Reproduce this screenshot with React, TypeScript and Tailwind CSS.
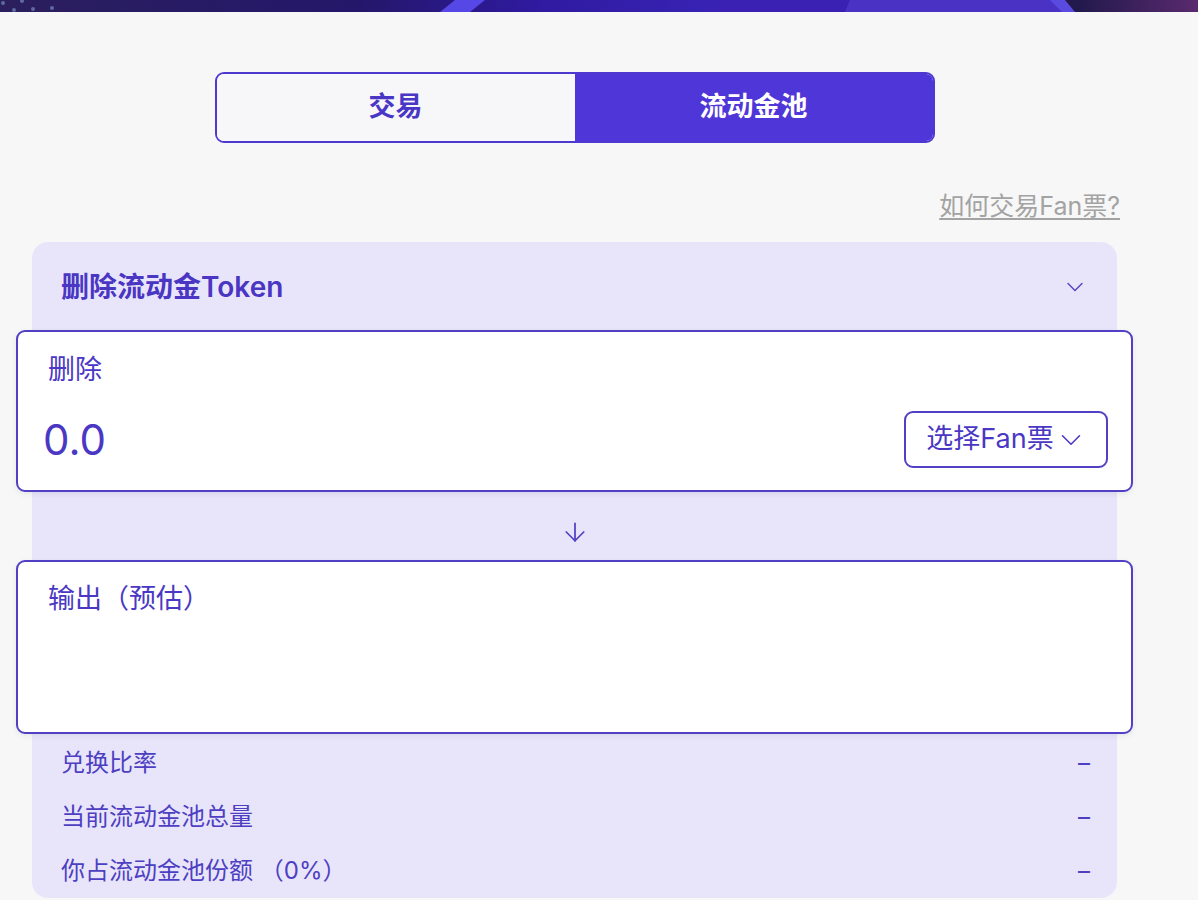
import { ChevronDown, ArrowDown } from "lucide-react";

const stats = [
  { label: "兑换比率", value: "–" },
  { label: "当前流动金池总量", value: "–" },
  { label: "你占流动金池份额 （0%）", value: "–" },
];

function Banner() {
  return (
    <svg width="1198" height="12" viewBox="0 0 1198 12" preserveAspectRatio="none" className="block">
      <defs>
        <linearGradient id="bn" x1="0" x2="1" y1="0" y2="0">
          <stop offset="0" stopColor="#2b1f5e" />
          <stop offset="0.3" stopColor="#24176a" />
          <stop offset="0.45" stopColor="#2f1aa0" />
          <stop offset="0.62" stopColor="#3a24b8" />
          <stop offset="0.7" stopColor="#4431c0" />
          <stop offset="0.76" stopColor="#231852" />
          <stop offset="0.9" stopColor="#22194c" />
          <stop offset="1" stopColor="#5a2a6e" />
        </linearGradient>
      </defs>
      <rect width="1198" height="12" fill="url(#bn)" />
      <polygon points="440,12 455,0 485,0 470,12" fill="#5648e6" />
      <polygon points="715,12 720,0 850,0 845,12" fill="#3a21b4" />
      <polygon points="845,12 850,0 1055,0 1068,12" fill="#4a33c4" />
      <polygon points="1050,0 1065,0 1075,12 1062,12" fill="#5b4ae0" />
      {[
        [3, 3],
        [22, 1],
        [14, 10],
        [33, 9],
        [52, 8],
      ].map(([x, y], i) => (
        <circle key={i} cx={x} cy={y} r="2" fill="#5f6aa0" />
      ))}
    </svg>
  );
}

export default function App() {
  return (
    <div className="min-h-screen bg-[#f7f7f7] font-['Inter','Noto_Sans_CJK_SC',sans-serif]">
      <Banner />
      <div className="w-[1149px]">
        <div className="flex justify-center pt-[60px]">
          <div className="flex h-[71px] w-[720px] overflow-hidden rounded-[9px] border-2 border-[#4d39d0]">
            <button className="flex flex-1 items-center justify-center bg-[#f7f6f9] text-[27px] font-bold text-[#4a36c6]">
              交易
            </button>
            <button className="flex flex-1 items-center justify-center bg-[#4f36d8] text-[27px] font-bold text-white">
              流动金池
            </button>
          </div>
        </div>

        <div className="flex justify-end pr-[29px] pt-[48px]">
          <a className="text-[25px] leading-[30px] text-[#a3a3a3] underline underline-offset-[3px]">
            如何交易Fan票?
          </a>
        </div>

        <div className="mx-[32px] mt-[21px] w-[1085px] rounded-[16px] bg-[#e8e5fb]">
          <div className="flex h-[88px] items-center justify-between pl-[29px] pr-[28px] pt-[2px]">
            <span className="text-[28px] font-semibold text-[#4a36c2]">删除流动金Token</span>
            <ChevronDown className="h-[28px] w-[28px] text-[#5a48c8]" strokeWidth={1.3} />
          </div>

          <div className="-mx-4 h-[162px] rounded-[9px] border-2 border-[#5140c4] bg-white pl-[30px] pr-[23px] pt-[19px] shadow-[0_2px_6px_rgba(0,0,0,0.07)]">
            <div className="text-[27px] leading-[38px] text-[#4a38c4]">删除</div>
            <div className="mt-[22px] flex h-[57px] items-center justify-between">
              <span className="-ml-[5px] text-[42px] leading-none text-[#4a38c4]">0.0</span>
              <button className="flex h-[57px] w-[204px] items-center justify-center rounded-[9px] border-2 border-[#5140c4] pl-[2px] text-[27px] text-[#4a38c4]">
                选择Fan票
                <ChevronDown className="h-[34px] w-[34px]" strokeWidth={1.1} />
              </button>
            </div>
          </div>

          <div className="flex h-[68px] items-center justify-center pt-[12px]">
            <ArrowDown className="h-[30px] w-[30px] text-[#5141c4]" strokeWidth={1.4} />
          </div>

          <div className="-mx-4 h-[174px] rounded-[9px] border-2 border-[#5140c4] bg-white pl-[30px] pt-[18px] shadow-[0_2px_6px_rgba(0,0,0,0.07)]">
            <div className="text-[27px] leading-[38px] text-[#4a38c4]">输出（预估）</div>
          </div>

          <div className="pl-[29px] pr-[27px] pt-[2px]">
            {stats.map((s) => (
              <div key={s.label} className="flex h-[54px] items-center justify-between text-[24px] text-[#4e3fc2]">
                <span>{s.label}</span>
                <span>{s.value}</span>
              </div>
            ))}
          </div>
        </div>
      </div>
    </div>
  );
}
